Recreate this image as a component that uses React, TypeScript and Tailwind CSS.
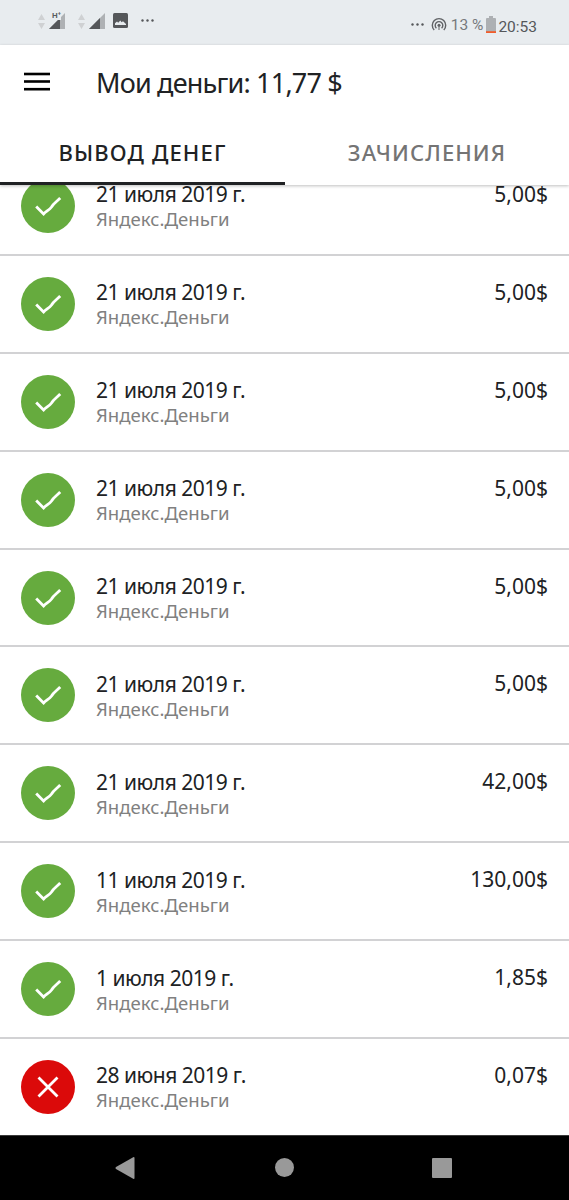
import React from 'react';

type Payment = { date: string; amount: string; failed?: boolean };

const payments: Payment[] = [
  { date: '21 июля 2019 г.', amount: '5,00$' },
  { date: '21 июля 2019 г.', amount: '5,00$' },
  { date: '21 июля 2019 г.', amount: '5,00$' },
  { date: '21 июля 2019 г.', amount: '5,00$' },
  { date: '21 июля 2019 г.', amount: '5,00$' },
  { date: '21 июля 2019 г.', amount: '5,00$' },
  { date: '21 июля 2019 г.', amount: '42,00$' },
  { date: '11 июля 2019 г.', amount: '130,00$' },
  { date: '1 июля 2019 г.', amount: '1,85$' },
  { date: '28 июня 2019 г.', amount: '0,07$', failed: true },
];

function Signal({ label }: { label?: string }) {
  return (
    <span className="relative flex h-5 w-7">
      <svg width="28" height="20" viewBox="0 0 28 20">
        <path d="M0 8 3.5 2 7 8Z M0 11H7L3.5 17Z" fill="#cfd1d3" />
        <path d="M11 17 27 1V17Z" fill="#aeb1b4" />
        <path d="M11 17 22 6V17Z" fill="#55575a" />
      </svg>
      {label && (
        <span className="absolute left-[14px] top-0 bg-[#e8ecef] text-[8px] leading-[8px] font-bold text-[#5a5c5f]">
          {label}
        </span>
      )}
    </span>
  );
}

function Dots() {
  return (
    <svg width="13" height="3" viewBox="0 0 13 3" fill="#55575a">
      <circle cx="1.5" cy="1.5" r="1.2" />
      <circle cx="6.5" cy="1.5" r="1.2" />
      <circle cx="11.5" cy="1.5" r="1.2" />
    </svg>
  );
}

function StatusBar() {
  return (
    <div className="flex h-[45px] shrink-0 items-start justify-between bg-[#e8ecef] pr-[32px] pl-[38px] font-['Roboto',sans-serif]">
      <div className="flex h-[41px] items-center">
        <span className="flex pt-[2px]">
          <Signal label="H⁺" />
        </span>
        <span className="ml-[12px] flex pt-[2px]">
          <Signal />
        </span>
        <svg className="ml-[7px]" width="15" height="15" viewBox="0 0 15 15">
          <rect width="15" height="15" rx="1.5" fill="#55575a" />
          <path d="M2 12V10.2L4 8.6L5.2 9.8L7.3 7.4L8.6 9.3L10 8.2L13 11V12Z" fill="#e8ecef" />
        </svg>
        <span className="ml-[13px] flex">
          <Dots />
        </span>
      </div>
      <div className="flex h-[49px] items-center">
        <span className="mr-[7px] flex">
          <Dots />
        </span>
        <svg width="16" height="16" viewBox="0 0 16 16" fill="none" stroke="#606265" strokeWidth="1.4">
          <path d="M3.2 13A6.7 6.7 0 1 1 12.8 13" />
          <path d="M5.4 11.2A3.8 3.8 0 1 1 10.6 11.2" />
          <circle cx="8" cy="8.3" r="1.5" fill="#606265" stroke="none" />
          <path d="M8 8.5V13" strokeWidth="1" />
        </svg>
        <span className="mt-[3px] ml-[4px] text-[15.5px] text-[#77797c]">13 %</span>
        <svg className="ml-[3px]" width="10" height="17" viewBox="0 0 10 17">
          <path d="M3 0H7V2H9Q10 2 10 3V17H0V3Q0 2 1 2H3Z" fill="#adb0b3" />
          <path d="M0 15.2H10V17H0Z" fill="#f25c2a" />
        </svg>
        <span className="mt-[6px] ml-[2px] text-[15.5px] text-[#55575a]">20:53</span>
      </div>
    </div>
  );
}

function Header() {
  return (
    <header className="relative z-10 h-[140px] shrink-0 bg-white shadow-[0_1px_3px_rgba(0,0,0,0.25)]">
      <div className="flex h-[73px] items-center pl-[24px]">
        <svg width="26" height="20" viewBox="0 0 26 20" fill="#000">
          <rect y="0.7" width="26" height="2.6" />
          <rect y="8.2" width="26" height="2.6" />
          <rect y="15.9" width="26" height="2.6" />
        </svg>
        <h1 className="mt-[2px] ml-[46px] text-[27px] leading-[36px] tracking-[-0.8px] whitespace-nowrap">Мои деньги: 11,77 $</h1>
      </div>
      <nav className="flex h-[67px] text-center text-[22px] font-medium">
        <button className="flex w-[285px] items-center justify-center border-b-[3px] border-[#202224] pt-[5px] tracking-[1.15px]">
          ВЫВОД ДЕНЕГ
        </button>
        <button className="flex flex-1 items-center justify-center border-b-[3px] border-transparent pt-[5px] tracking-[1.1px] text-[#747474]">
          ЗАЧИСЛЕНИЯ
        </button>
      </nav>
    </header>
  );
}

function StatusIcon({ failed }: { failed?: boolean }) {
  return (
    <svg className="shrink-0" width="54" height="54" viewBox="0 0 54 54" fill="none" stroke="#fff" strokeWidth="2.8">
      <circle cx="27" cy="27" r="27" fill={failed ? '#db0a0a' : '#66ab3e'} stroke="none" />
      {failed ? (
        <path d="M17.5 17.5 36.5 36.5M36.5 17.5 17.5 36.5" />
      ) : (
        <path d="M15.2 27.6 22.6 35C25.2 32.3 28.5 30.8 30.5 28C32.5 24.5 36 22.5 39.2 19" />
      )}
    </svg>
  );
}

function PaymentRow({ date, amount, failed }: Payment) {
  return (
    <li className="flex h-[97.9px] items-start border-b-2 border-[#d2d2d4] px-[21px] last:border-transparent">
      <span className="mt-[21px] flex">
        <StatusIcon failed={failed} />
      </span>
      <div className="mt-[23.4px] ml-[21px] flex-1">
        <div className="text-[21px] leading-[27px] tracking-[-0.5px]">{date}</div>
        <div className="-mt-[1px] text-[18.6px] leading-[24px] text-[#808080]">Яндекс.Деньги</div>
      </div>
      <div className="mt-[23px] text-[21px] leading-[27px]">{amount}</div>
    </li>
  );
}

function NavBar() {
  return (
    <div className="flex h-[65px] shrink-0 items-center justify-between border-t border-[#3a3a3a] bg-black pr-[117px] pb-[1px] pl-[115px]">
      <svg width="20" height="22" viewBox="0 0 20 22" fill="#999">
        <path d="M18.2 0.2Q19.5-.3 19.5 1V21Q19.5 22.3 18.2 21.7L1 12Q0 11 1 10Z" />
      </svg>
      <span className="ml-[1px] size-[19px] rounded-full bg-[#999]" />
      <span className="size-[20px] rounded-[1px] bg-[#999]" />
    </div>
  );
}

export default function App() {
  return (
    <div className="flex h-[1200px] w-[569px] flex-col overflow-hidden bg-white font-['Noto_Sans',sans-serif] text-[#202224]">
      <StatusBar />
      <Header />
      <main className="min-h-0 flex-1 overflow-hidden">
        <ul className="-mt-[27px]">
          {payments.map((payment, i) => (
            <PaymentRow key={i} {...payment} />
          ))}
        </ul>
      </main>
      <NavBar />
    </div>
  );
}
